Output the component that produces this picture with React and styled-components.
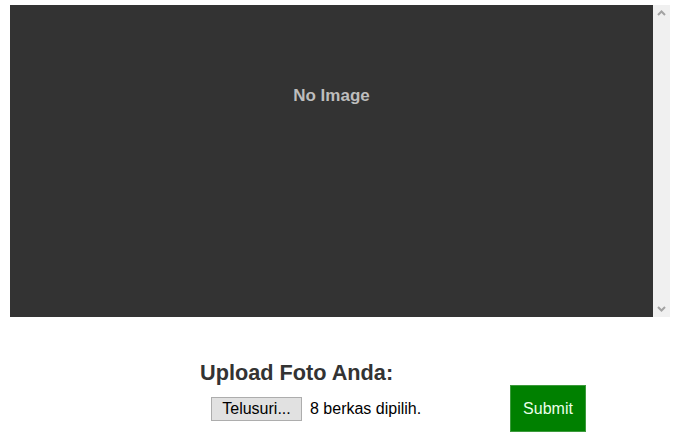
import React from 'react';
import styled, { createGlobalStyle } from 'styled-components';

const GlobalStyle = createGlobalStyle`
  body {
    margin: 0;
    background: #fff;
    font-family: "Liberation Sans", Arial, sans-serif;
  }
`;

const Page = styled.div`
  width: 680px;
  height: 447px;
  padding: 5px 10px 0 10px;
  box-sizing: border-box;
`;

const Viewer = styled.div`
  display: flex;
  height: 312px;
  width: 660px;
`;

const Screen = styled.div`
  flex: 1;
  background: #333333;
  display: flex;
  justify-content: center;
  padding-top: 81px;
  box-sizing: border-box;
`;

const Placeholder = styled.span`
  color: #bdbdbd;
  font-weight: bold;
  font-size: 17px;
  line-height: 19px;
`;

const Track = styled.div`
  width: 17px;
  background: #f0f0f0;
  display: flex;
  flex-direction: column;
  justify-content: space-between;
  align-items: center;
  padding: 4px 0;
  box-sizing: border-box;
`;

const Arrow = styled.svg`
  width: 9px;
  height: 9px;
  display: block;
`;

const UploadForm = styled.form`
  margin: 44px 0 0 190px;
  display: flex;
  flex-direction: column;
`;

const Heading = styled.h3`
  margin: 0;
  color: #333;
  font-size: 21.7px;
  line-height: 24px;
  font-weight: bold;
`;

const Row = styled.div`
  display: flex;
  align-items: center;
  padding-left: 11px;
`;

const BrowseButton = styled.span`
  display: inline-flex;
  align-items: center;
  justify-content: center;
  width: 91px;
  height: 24px;
  box-sizing: border-box;
  background: #e1e1e1;
  border: 1px solid #adadad;
  font-size: 16px;
  color: #000;
`;

const FileStatus = styled.span`
  margin-left: 8px;
  font-size: 16px;
  color: #000;
  width: 200px;
`;

const SubmitButton = styled.button`
  width: 76px;
  height: 47px;
  background: #008000;
  border: 1px solid #3c9a3c;
  color: #eaffea;
  font-family: "Liberation Sans", Arial, sans-serif;
  font-size: 16px;
  padding: 0;
`;

export default function App() {
  return (
    <>
      <GlobalStyle />
      <Page>
        <Viewer>
          <Screen>
            <Placeholder>No Image</Placeholder>
          </Screen>
          <Track>
            <Arrow viewBox="0 0 9 9">
              <path d="M1 6 L4.5 2.5 L8 6" fill="none" stroke="#a3a3a3" strokeWidth="2" />
            </Arrow>
            <Arrow viewBox="0 0 9 9">
              <path d="M1 3 L4.5 6.5 L8 3" fill="none" stroke="#a3a3a3" strokeWidth="2" />
            </Arrow>
          </Track>
        </Viewer>
        <UploadForm onSubmit={e => e.preventDefault()}>
          <Heading>Upload Foto Anda:</Heading>
          <Row>
            <BrowseButton>Telusuri...</BrowseButton>
            <FileStatus>8 berkas dipilih.</FileStatus>
            <SubmitButton type="submit">Submit</SubmitButton>
          </Row>
        </UploadForm>
      </Page>
    </>
  );
}
